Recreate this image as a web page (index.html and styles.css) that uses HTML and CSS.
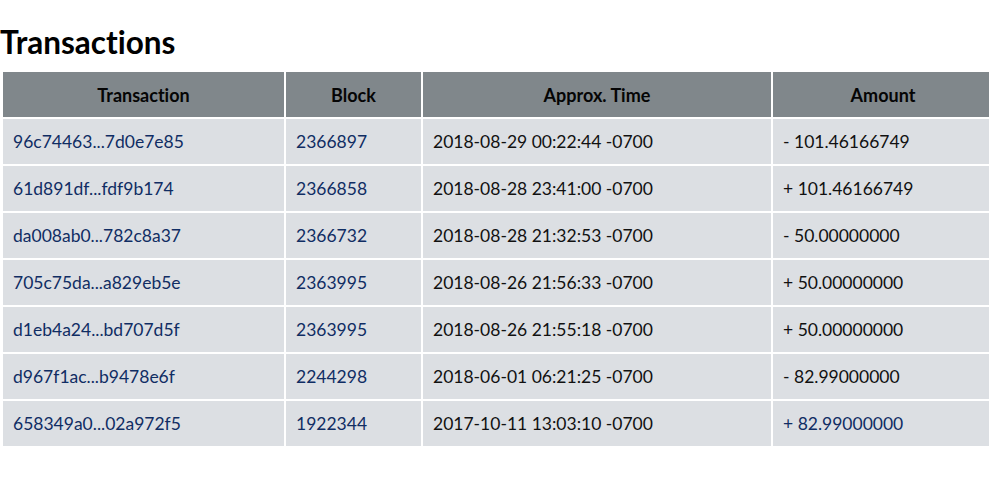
FILE: index.html
```html
<!DOCTYPE html>
<html>
<head>
<meta charset="utf-8">
<link rel="stylesheet" href="styles.css">
</head>
<body>
<h1 class="title">Transactions</h1>
<table class="tx">
  <thead>
    <tr>
      <th class="c1">Transaction</th>
      <th class="c2">Block</th>
      <th class="c3">Approx. Time</th>
      <th class="c4">Amount</th>
    </tr>
  </thead>
  <tbody>
    <tr><td><a class="link">96c74463...7d0e7e85</a></td><td><a class="link">2366897</a></td><td>2018-08-29 00:22:44 -0700</td><td>- 101.46166749</td></tr>
    <tr><td><a class="link">61d891df...fdf9b174</a></td><td><a class="link">2366858</a></td><td>2018-08-28 23:41:00 -0700</td><td>+ 101.46166749</td></tr>
    <tr><td><a class="link">da008ab0...782c8a37</a></td><td><a class="link">2366732</a></td><td>2018-08-28 21:32:53 -0700</td><td>- 50.00000000</td></tr>
    <tr><td><a class="link">705c75da...a829eb5e</a></td><td><a class="link">2363995</a></td><td>2018-08-26 21:56:33 -0700</td><td>+ 50.00000000</td></tr>
    <tr><td><a class="link">d1eb4a24...bd707d5f</a></td><td><a class="link">2363995</a></td><td>2018-08-26 21:55:18 -0700</td><td>+ 50.00000000</td></tr>
    <tr><td><a class="link">d967f1ac...b9478e6f</a></td><td><a class="link">2244298</a></td><td>2018-06-01 06:21:25 -0700</td><td>- 82.99000000</td></tr>
    <tr><td><a class="link">658349a0...02a972f5</a></td><td><a class="link">1922344</a></td><td>2017-10-11 13:03:10 -0700</td><td><a class="link">+ 82.99000000</a></td></tr>
  </tbody>
</table>
</body>
</html>
```
FILE: styles.css
```css
html, body {
  margin: 0;
  padding: 0;
  background: #ffffff;
  overflow: hidden;
}
body {
  font-family: Lato, "Liberation Sans", sans-serif;
  color: #111111;
  font-variant-ligatures: none;
}
.title {
  font-size: 31.5px;
  font-weight: 700;
  line-height: 36px;
  margin: 24px 0 10px 0;
  color: #000000;
}
.tx {
  border-collapse: separate;
  border-spacing: 2px;
  margin-left: 1px;
  width: 994px;
  table-layout: fixed;
}
.tx th {
  background: #80878b;
  font-weight: 700;
  font-size: 18px;
  height: 45px;
  padding: 0;
  text-align: center;
  color: #050505;
}
.tx td {
  background: #dcdfe3;
  font-size: 17.5px;
  height: 45px;
  padding: 0 0 0 10px;
  text-align: left;
  white-space: nowrap;
}
.c1 { width: 281px; }
.c2 { width: 135px; }
.c3 { width: 348px; }
.link {
  color: #102d63;
  text-decoration: none;
}
```
